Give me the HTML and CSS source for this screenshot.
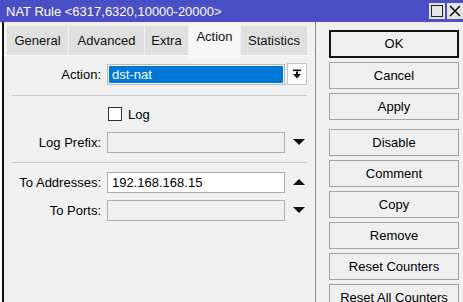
FILE: index.html
```html
<!DOCTYPE html>
<html lang="en">
<head>
  <meta charset="UTF-8">
  <title>NAT Rule</title>
  <link rel="stylesheet" href="styles.css">
</head>
<body>
<div class="window">
  <div class="titlebar">
    <span class="title">NAT Rule &lt;6317,6320,10000-20000&gt;</span>
    <span class="tb-btn">
      <svg width="14" height="14" viewBox="0 0 14 14"><rect x="1.5" y="1.5" width="11" height="11" fill="none" stroke="#222" stroke-width="1"/></svg>
    </span>
    <span class="tb-btn">
      <svg width="14" height="14" viewBox="0 0 14 14"><path d="M2 2 L12 12 M12 2 L2 12" stroke="#111" stroke-width="1.6"/></svg>
    </span>
  </div>

  <div class="content">
    <div class="edge"></div>
    <div class="left">
      <div class="tabs">
        <div class="tab w-general">General</div>
        <div class="tab w-advanced">Advanced</div>
        <div class="tab w-extra">Extra</div>
        <div class="tab active w-action">Action</div>
        <div class="tab w-stats">Statistics</div>
      </div>
      <div class="panel">
        <div class="row first">
          <label class="lbl">Action:</label>
          <div class="field selected">dst-nat</div>
          <div class="arrow">
            <span class="drop-btn">
              <svg width="10" height="10" viewBox="0 0 10 10">
                <rect x="1" y="0.5" width="8" height="1.6" fill="#111"/>
                <rect x="4" y="2.5" width="2" height="3" fill="#111"/>
                <path d="M1 5 L9 5 L5 9.5 Z" fill="#111"/>
              </svg>
            </span>
          </div>
        </div>

        <div class="sep sep1"></div>

        <div class="row check-row">
          <span class="lbl"></span>
          <span class="checkbox"></span>
          <span class="check-text">Log</span>
        </div>

        <div class="row prefix">
          <label class="lbl">Log Prefix:</label>
          <div class="field"></div>
          <div class="arrow"><span class="tri down"></span></div>
        </div>

        <div class="sep sep2"></div>

        <div class="row addr">
          <label class="lbl">To Addresses:</label>
          <div class="field white">192.168.168.15</div>
          <div class="arrow"><span class="tri up"></span></div>
        </div>

        <div class="row ports">
          <label class="lbl">To Ports:</label>
          <div class="field"></div>
          <div class="arrow"><span class="tri down"></span></div>
        </div>
      </div>
    </div>

    <div class="buttons">
      <div class="btn default">OK</div>
      <div class="btn">Cancel</div>
      <div class="btn">Apply</div>
      <div class="btn spaced">Disable</div>
      <div class="btn">Comment</div>
      <div class="btn">Copy</div>
      <div class="btn">Remove</div>
      <div class="btn">Reset Counters</div>
      <div class="btn">Reset All Counters</div>
    </div>
  </div>
</div>
</body>
</html>
```

FILE: styles.css
```css
body {
    margin: 0;
    font-family: "Liberation Sans", Arial, sans-serif;
    font-size: 13px;
    color: #000;
    background: #f0f0f0;
}

.window {
    width: 463px;
    height: 302px;
    overflow: hidden;
    display: flex;
    flex-direction: column;
    background: #f0f0f0;
}

.titlebar {
    height: 22px;
    flex: none;
    background: #4b4ec4;
    display: flex;
    align-items: center;
    padding-left: 6px;
}

.title {
    color: #fff;
    font-size: 13px;
    flex: 1;
    padding-top: 1px;
}

.tb-btn {
    width: 16px;
    height: 16px;
    margin-left: 2px;
    background: #e4e4e4;
    display: flex;
    align-items: center;
    justify-content: center;
}

.content {
    flex: 1;
    display: flex;
}

.edge {
    width: 2px;
    background: #fff;
    border-right: 2px solid #111;
}

.left {
    width: 311px;
    border-right: 1px solid #8c8c8c;
    display: flex;
    flex-direction: column;
}

/* tabs */
.tabs {
    display: flex;
    gap: 1px;
    padding: 3px 0 0 3px;
    height: 30px;
    align-items: flex-start;
}

.tab {
    height: 29px;
    line-height: 30px;
    margin-top: 1px;
    background: #dfdfdf;
    text-align: center;
    color: #111;
}

.tab.active {
    background: #f7f7f7;
    margin-top: -2px;
    height: 36px;
    line-height: 28px;
    position: relative;
    z-index: 1;
}

.w-general { width: 61px; }
.w-advanced { width: 75px; }
.w-extra { width: 43px; }
.w-action { width: 51px; }
.w-stats { width: 66px; }

.panel {
    flex: 1;
    border-top: 1px solid #fafafa;
    padding-top: 7px;
}

.row {
    display: flex;
    align-items: center;
    height: 22px;
}

.lbl {
    width: 97px;
    text-align: right;
    margin-right: 6px;
    flex: none;
}

.field {
    width: 176px;
    height: 19px;
    border: 1px solid #adadad;
    background: #f0f0f0;
    line-height: 19px;
    font-size: 13px;
}

.field.white {
    background: #fff;
    padding-left: 4px;
    width: 172px;
}

.field.selected {
    background: #0078d7;
    color: #fff;
    border: 1px solid #b8b8b8;
    box-shadow: inset 0 0 0 1px #fff;
    padding-left: 4px;
    width: 172px;
}

.arrow {
    width: 22px;
    height: 22px;
    display: flex;
    align-items: center;
    justify-content: center;
    margin-left: 1px;
}

.drop-btn {
    width: 18px;
    height: 20px;
    border: 1px solid #c4c4c4;
    background: #fdfdfd;
    display: flex;
    align-items: center;
    justify-content: center;
}

.tri {
    width: 0;
    height: 0;
    border-left: 6px solid transparent;
    border-right: 6px solid transparent;
    margin-left: 3px;
}

.tri.down { border-top: 6px solid #111; }
.tri.up { border-bottom: 6px solid #111; }

.sep {
    height: 1px;
    background: #c9c9c9;
    margin-left: 8px;
    width: 295px;
}

.sep1 { margin-top: 10px; }
.sep2 { margin-top: 9px; }

.check-row {
    margin-top: 9px;
    height: 18px;
}

.checkbox {
    width: 12px;
    height: 12px;
    border: 1px solid #333;
    background: #fff;
    margin-left: 1px;
}

.check-text {
    margin-left: 6px;
}

.prefix { margin-top: 8px; }
.addr { margin-top: 8px; }
.ports { margin-top: 6px; }

/* right column */
.buttons {
    padding: 8px 0 0 13px;
    display: flex;
    flex-direction: column;
    gap: 4px;
}

.btn {
    width: 128px;
    height: 25px;
    line-height: 25px;
    border: 1px solid #a3a3a3;
    background: #efefef;
    text-align: center;
    flex: none;
}

.btn.default {
    border: 2px solid #111;
    width: 126px;
    height: 24px;
    line-height: 24px;
}

.btn.spaced {
    margin-top: 5px;
}
```
